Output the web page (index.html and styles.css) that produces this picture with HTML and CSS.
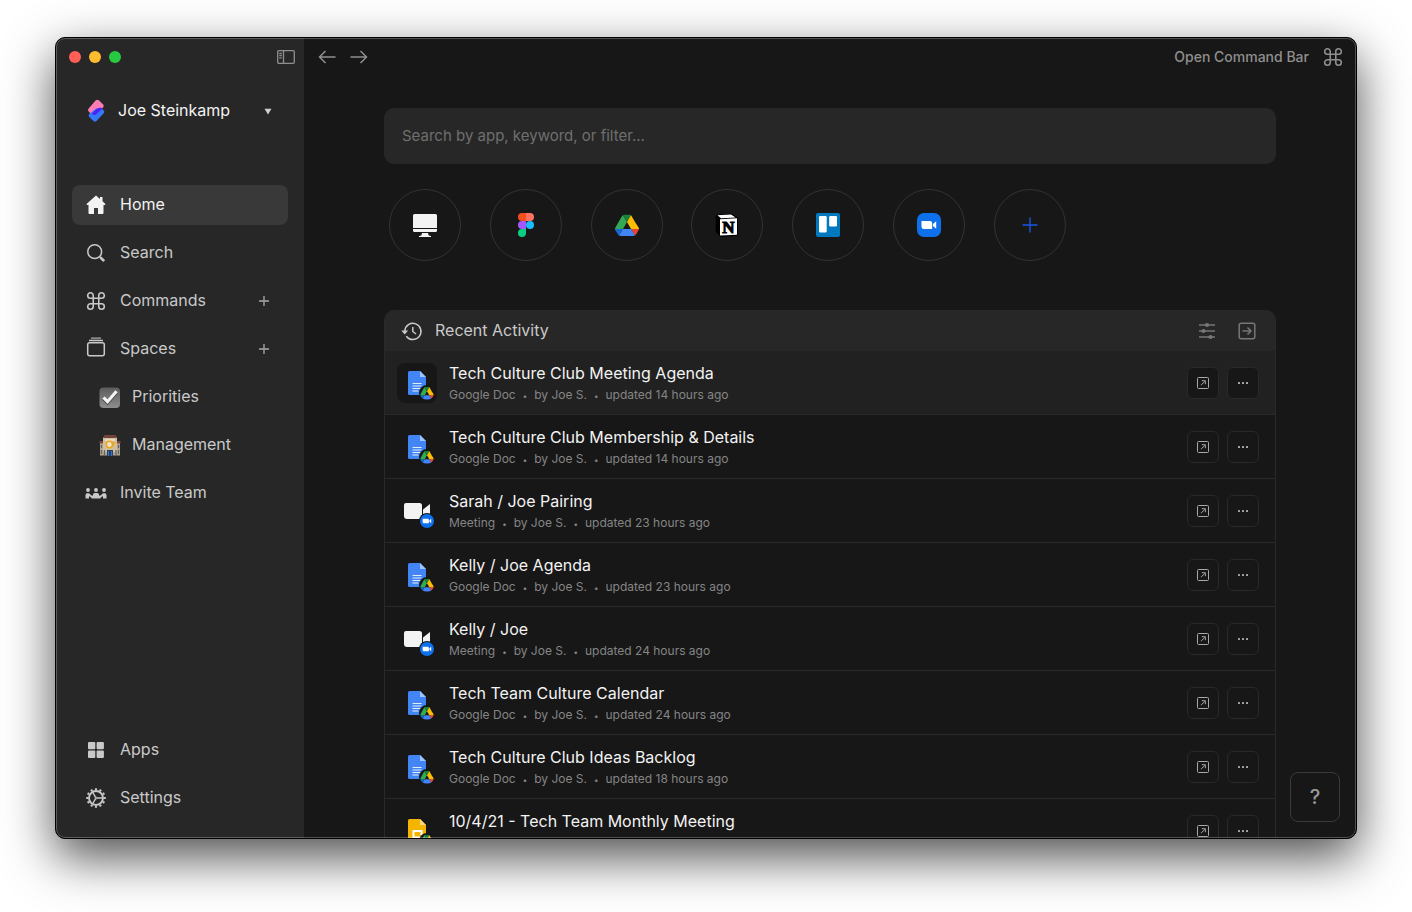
FILE: index.html
```html
<!DOCTYPE html>
<html lang="en">
<head>
<meta charset="utf-8">
<title>Home</title>
<link rel="stylesheet" href="styles.css">
</head>
<body>
<svg class="sprite" aria-hidden="true">
  <symbol id="command" viewBox="-1 -1 26 26"><path d="M15 6v12a3 3 0 1 0 3-3H6a3 3 0 1 0 3 3V6a3 3 0 1 0-3 3h12a3 3 0 1 0-3-3" fill="none" stroke="currentColor" stroke-width="1.700"/></symbol>
  <symbol id="plus" viewBox="0 0 24 24"><path d="M12 7v10M7 12h10" fill="none" stroke="currentColor" stroke-width="1.300"/></symbol>
  <symbol id="drive" viewBox="0 0 24 22">
    <path d="M1.800 18.600 3 20.500c.3.500.7.900 1.100 1.100L8 15H0c0 .5.100 1 .4 1.500z" fill="#1967d2"/>
    <path d="M12 8 8 1.200c-.4.200-.8.600-1.100 1L.4 13.500C.1 14 0 14.500 0 15h8z" fill="#34a853"/>
    <path d="M19.900 21.600c.4-.2.800-.6 1.100-1l.5-.9 2.100-3.700c.3-.5.4-1 .4-1h-8l1.700 3.300z" fill="#ea4335"/>
    <path d="M12 8l4-6.800C15.600.9 15.100.8 14.600.8H9.400c-.5 0-1 .1-1.400.4z" fill="#188038"/>
    <path d="M16 15H8l-3.900 6.600c.4.200.9.400 1.400.4h13c.5 0 1-.1 1.400-.4z" fill="#4285f4"/>
    <path d="m20 8.100-3.300-5.900c-.2-.4-.400-.8-.8-1L12 8l4 7h8c0-.5-.1-1-.4-1.500z" fill="#fbbc04"/>
  </symbol>
  <symbol id="zoom" viewBox="0 0 24 24"><rect width="24" height="24" rx="7" fill="#0e71eb"/><path d="M4.500 8h8.500a2.200 2.200 0 0 1 2.200 2.200V16H6.800a2.300 2.300 0 0 1-2.300-2.300zM16 11l3.200-2.700v7.400L16 13z" fill="#fff"/></symbol>
  <symbol id="file-doc" viewBox="0 0 40 40"><path d="M13 8h10l6 6v16.500q0 1.500-1.500 1.500h-15Q11 32 11 30.500v-21Q11 8 12.500 8z" fill="#4285f4"/><path d="M23 8l6 6h-6z" fill="#a1c2fa"/><path d="M15.500 20.500h9M15.500 23h9M15.500 25.500h9M15.500 28h6" stroke="#e3edfd" stroke-width="1.200"/></symbol>
  <symbol id="file-slides" viewBox="0 0 40 40"><path d="M13 8h10l6 6v16.500q0 1.500-1.500 1.500h-15Q11 32 11 30.500v-21Q11 8 12.500 8z" fill="#f4b400"/><path d="M23 8l6 6h-6z" fill="#fada80"/><path d="M16.500 20h8v6.500h-8z" fill="none" stroke="#fff" stroke-width="2"/></symbol>
  <symbol id="file-meeting" viewBox="0 0 40 40"><path d="M9 12h13.500q2.500 0 2.500 2.500V28H10q-3 0-3-3V14q0-2 2-2z" fill="#f3f3f3"/><path d="M26 18.500l7-5.500v14l-7-4z" fill="#f3f3f3"/></symbol>
  <symbol id="open" viewBox="0 0 16 16"><rect x="2.500" y="2.500" width="11" height="11" rx="1" fill="none" stroke="currentColor"/><path d="M6 10.200l3.800-3.800M6.800 5.700h3.500v3.500" fill="none" stroke="currentColor"/></symbol>
  <symbol id="dots" viewBox="0 0 16 16"><g fill="currentColor"><rect x="3" y="7" width="2" height="2" rx=".5"/><rect x="7" y="7" width="2" height="2" rx=".5"/><rect x="11" y="7" width="2" height="2" rx=".5"/></g></symbol>
</svg>

<div class="window">
  <aside class="sidebar">
    <div class="titlebar">
      <div class="lights"><button class="light red" aria-label="Close"></button><button class="light amber" aria-label="Minimize"></button><button class="light green" aria-label="Zoom"></button></div>
      <button class="plain" aria-label="Toggle sidebar"><svg width="18" height="14" viewBox="0 0 18 14" fill="none" stroke="currentColor" stroke-width="1.300"><rect x=".7" y=".7" width="16.600" height="12.600" rx="1.200"/><path d="M6.500 1v12M2.300 3.500h2.500M2.300 5.700h2.500M2.300 7.900h2.500"/></svg></button>
    </div>
    <button class="account">
      <svg class="icon" viewBox="0 0 24 24"><path d="M11.800 1.300q1.500-1.200 3 0l4.400 4.200q1.200 1.300 0 2.800L13 14.500H6.500l-1.800-2q-1.600-1.500 0-3z" fill="#fe7db4"/><path d="M12 9.500h6l1.700 2q1.400 1.300 0 2.800l-7.200 7.800q-1.500 1.400-3 0l-4.300-4.200q-1.300-1.400 0-2.800z" fill="#3478f8"/><path d="M8 14.500l5-4.700q1.500-1 3-1h1.500q.8.800 0 1.700l-5 4.500q-1.500 1.300-3 .9z" fill="#4a22f5"/></svg>
      <span class="label">Joe Steinkamp</span>
      <svg class="icon" viewBox="0 0 24 24"><path d="M8.500 9.700h7L12 15.500z" fill="#cfcfcf"/></svg>
    </button>
    <nav class="nav">
      <ul class="list">
        <li class="item active"><a href="#home"><svg class="icon" viewBox="0 0 24 24" fill="currentColor"><path d="M12 2.500l4 3.500V4h2.500v4.200l2.700 2.500q.6 1.100-.4 1.300H19.500v8q0 1-1 1H14v-6h-4v6H5.500q-1 0-1-1v-8H3.200q-1-.2-.4-1.300z"/></svg><span class="label">Home</span></a></li>
        <li class="item"><a href="#search"><svg class="icon" viewBox="0 0 24 24" fill="none" stroke="currentColor"><circle cx="10.700" cy="10.700" r="6.900" stroke-width="1.500"/><path d="M15.700 15.700l1.500 1.500" stroke-width="1.500"/><path d="M16.500 16.500l3.700 3.700" stroke-width="2.600"/></svg><span class="label">Search</span></a></li>
        <li class="item"><a href="#commands"><svg class="icon"><use href="#command"/></svg><span class="label">Commands</span></a><button class="plain add" aria-label="Add command"><svg class="icon"><use href="#plus"/></svg></button></li>
        <li class="item"><a href="#spaces"><svg class="icon" viewBox="0 0 24 24" fill="none" stroke="currentColor" stroke-width="1.500"><rect x="3.700" y="5.700" width="16.600" height="13" rx="2"/><path d="M5 3.500h14"/><path d="M7 1.200h10" opacity=".6" stroke-width="1.800"/></svg><span class="label">Spaces</span></a><button class="plain add" aria-label="Add space"><svg class="icon"><use href="#plus"/></svg></button></li>
        <li class="item sub"><a href="#priorities"><svg class="icon" viewBox="0 0 24 24"><defs><linearGradient id="tile" x2="0" y2="1"><stop stop-color="#5c5c5c"/><stop offset="1" stop-color="#8e8e8e"/></linearGradient></defs><rect x="1.500" y="2.500" width="20.500" height="20.500" rx="4" fill="url(#tile)"/><path d="M5.500 13.500l4 4L18.500 7" fill="none" stroke="#444" stroke-width="3.600"/><path d="M5.500 12.500l4 4.200L18.500 6.300" fill="none" stroke="#f4f4f4" stroke-width="3.200"/></svg><span class="label">Priorities</span></a></li>
        <li class="item sub"><a href="#management"><svg class="icon" viewBox="0 0 24 24"><path d="M2 9h20v13.500H2z" fill="#b5a58b"/><path d="M5 4h14v15H5z" fill="#cfbfa2"/><path d="M6.500 2h11l1.500 3H5z" fill="#75413b"/><path d="M1.500 8H5v2.500H1.500zM19 8h3.500v2.500H19z" fill="#7d463f"/><path d="M7 6.500h10v1H7z" fill="#fff5df"/><circle cx="11.500" cy="11.500" r="3.200" fill="#ede2cc" stroke="#f0a51c" stroke-width="1.500"/><path d="M13 10l5-1.500-3 5z" fill="#eda51f"/><path d="M3.500 12v3M20.500 12v3M3.500 17v4M6.500 17v5M18 17v5M20.500 17v4" stroke="#5d6670" stroke-width="1.300"/><path d="M9 17h6v6H9z" fill="#303a50"/><path d="M10.500 18v5M13.500 18v5" stroke="#2f72c9" stroke-width="1.300"/></svg><span class="label">Management</span></a></li>
        <li class="item"><a href="#invite"><svg class="icon" viewBox="0 0 24 24" fill="currentColor"><circle cx="4" cy="9" r="1.900"/><circle cx="12" cy="9" r="1.900"/><circle cx="20" cy="9" r="1.900"/><path d="M1.500 17.500v-3.500q0-1.800 1.800-1.800h1.400q1 0 1.800 1.500l2 1.400q.5-3 2-3h3q1.500 0 2 3l2-1.400q.8-1.500 1.800-1.500h1.400q1.800 0 1.800 1.800v3.500h-3.500v-2.500l-2.500 1.700v.8h-9v-.8L5 15v2.500z"/></svg><span class="label">Invite Team</span></a></li>
      </ul>
      <ul class="list">
        <li class="item"><a href="#apps"><svg class="icon" viewBox="0 0 24 24" fill="currentColor"><rect x="4" y="4" width="7.300" height="7.300" rx="1"/><rect x="12.600" y="4" width="7.300" height="7.300" rx="1"/><rect x="4" y="12.600" width="7.300" height="7.300" rx="1"/><rect x="12.600" y="12.600" width="7.300" height="7.300" rx="1"/></svg><span class="label">Apps</span></a></li>
        <li class="item"><a href="#settings"><svg class="icon" viewBox="0 0 24 24" fill="none" stroke="currentColor"><circle cx="12" cy="12" r="7" stroke-width="1.900"/><circle cx="12" cy="12" r="8.800" stroke-width="2" pathLength="48" stroke-dasharray="1.800 2.200" stroke-dashoffset=".9"/><path d="M13 12h6M11.500 11.200L8.500 6M11.500 12.800L8.500 18" stroke-width="1.400"/><circle cx="12" cy="12" r="1" stroke-width="1"/></svg><span class="label">Settings</span></a></li>
      </ul>
    </nav>
  </aside>

  <main class="main">
    <header class="topbar">
      <div class="history">
        <button class="plain" aria-label="Back"><svg width="18" height="14" viewBox="0 0 18 14" fill="none" stroke="currentColor" stroke-width="1.500"><path d="M17.500 7H1.500M7.500 1L1.500 7l6 6"/></svg></button>
        <button class="plain" aria-label="Forward"><svg width="18" height="14" viewBox="0 0 18 14" fill="none" stroke="currentColor" stroke-width="1.500"><path d="M.5 7h16M10.500 1l6 6-6 6"/></svg></button>
      </div>
      <button class="plain command-bar">Open Command Bar <svg class="icon"><use href="#command"/></svg></button>
    </header>
    <div class="content">
      <input class="search" type="search" aria-label="Search" placeholder="Search by app, keyword, or filter...">
      <div class="apps">
        <button class="app" aria-label="Desktop"><svg class="icon" viewBox="0 0 24 24" fill="#f3f3f3"><path d="M1.500 1h21Q24 1 24 2.500V15H0V2.500Q0 1 1.500 1zM0 16h24v1.500q0 1.500-1.500 1.500h-21Q0 19 0 17.500zM9 20h6l.7 2.500 2.300.6v.9H6v-.9l2.300-.6z"/></svg></button>
        <button class="app" aria-label="Figma"><svg class="icon" viewBox="0 0 24 24"><path d="M8 0h4v8H8a4 4 0 0 1 0-8z" fill="#f24e1e"/><path d="M12 0h4a4 4 0 0 1 0 8h-4z" fill="#ff7262"/><path d="M8 8h4v8H8a4 4 0 0 1 0-8z" fill="#a259ff"/><circle cx="16" cy="12" r="4" fill="#1abcfe"/><path d="M8 16h4v4a4 4 0 1 1-4-4z" fill="#0acf83"/></svg></button>
        <button class="app" aria-label="Google Drive"><svg class="icon"><use href="#drive"/></svg></button>
        <button class="app" aria-label="Notion"><svg class="icon" viewBox="0 0 24 24"><path d="M1.500 1.800L16.500.5 23 4.500v18L5.500 24 .7 18.500V3z" fill="#000"/><path d="M2.500 2.300L16 1.500l4.500 3-14.500.8z" fill="#fff"/><path d="M5 6.300l17-1v16.400L5 22.600z" fill="#fff"/><text x="13.500" y="19.800" class="notion-letter">N</text></svg></button>
        <button class="app" aria-label="Trello"><svg class="icon" viewBox="0 0 24 24"><rect width="24" height="24" rx="2" fill="#0079bf"/><rect x="3" y="3" width="7.700" height="16.500" rx="1.200" fill="#fff"/><rect x="13.200" y="3" width="7.800" height="10.500" rx="1.200" fill="#fff"/></svg></button>
        <button class="app" aria-label="Zoom"><svg class="icon"><use href="#zoom"/></svg></button>
        <button class="app add-app" aria-label="Add app"><svg class="icon" viewBox="0 0 24 24"><path d="M12 4.500v15M4.500 12h15" stroke="currentColor" stroke-width="1.400"/></svg></button>
      </div>

      <section class="panel" aria-labelledby="recent">
        <div class="panel-head">
          <svg class="icon" viewBox="0 0 24 24" fill="none" stroke="currentColor"><path d="M4.800 12a8.100 8.100 0 1 1 1.500 5.200" stroke-width="1.500"/><path d="M1.300 11.500h6.800l-3.400 4z" fill="currentColor" stroke="none"/><path d="M12.800 8v4.500l3.200 2.500" stroke-width="1.500"/></svg>
          <h2 id="recent" class="label">Recent Activity</h2>
          <button class="plain" aria-label="Filter"><svg width="18" height="18" viewBox="0 0 18 18" stroke="currentColor" fill="currentColor"><path d="M1 3h16M1 9h16M1 15h16" stroke-width="1.700"/><g stroke="none"><circle cx="9" cy="3" r="2.100"/><circle cx="5.500" cy="9" r="2.100"/><circle cx="12.500" cy="15" r="2.100"/></g></svg></button>
          <button class="plain" aria-label="Open list"><svg width="18" height="18" viewBox="0 0 18 18" stroke="currentColor" fill="none" stroke-width="1.500"><rect x="1.200" y="1.200" width="15.600" height="15.600" rx="2"/><path d="M4.500 9h8.500M9.500 5.500L13 9l-3.500 3.500"/></svg></button>
        </div>
        <ul class="rows">
          <li class="row current"><span class="thumb"><svg class="file"><use href="#file-doc"/></svg><svg class="badge"><use href="#drive"/></svg></span><div class="info"><h3>Tech Culture Club Meeting Agenda</h3><p class="meta"><span>Google Doc</span><span>by Joe S.</span><span>updated 14 hours ago</span></p></div><button class="square" aria-label="Open"><svg><use href="#open"/></svg></button><button class="square" aria-label="More"><svg><use href="#dots"/></svg></button></li>
          <li class="row"><span class="thumb"><svg class="file"><use href="#file-doc"/></svg><svg class="badge"><use href="#drive"/></svg></span><div class="info"><h3>Tech Culture Club Membership &amp; Details</h3><p class="meta"><span>Google Doc</span><span>by Joe S.</span><span>updated 14 hours ago</span></p></div><button class="square" aria-label="Open"><svg><use href="#open"/></svg></button><button class="square" aria-label="More"><svg><use href="#dots"/></svg></button></li>
          <li class="row"><span class="thumb"><svg class="file"><use href="#file-meeting"/></svg><svg class="badge"><use href="#zoom"/></svg></span><div class="info"><h3>Sarah / Joe Pairing</h3><p class="meta"><span>Meeting</span><span>by Joe S.</span><span>updated 23 hours ago</span></p></div><button class="square" aria-label="Open"><svg><use href="#open"/></svg></button><button class="square" aria-label="More"><svg><use href="#dots"/></svg></button></li>
          <li class="row"><span class="thumb"><svg class="file"><use href="#file-doc"/></svg><svg class="badge"><use href="#drive"/></svg></span><div class="info"><h3>Kelly / Joe Agenda</h3><p class="meta"><span>Google Doc</span><span>by Joe S.</span><span>updated 23 hours ago</span></p></div><button class="square" aria-label="Open"><svg><use href="#open"/></svg></button><button class="square" aria-label="More"><svg><use href="#dots"/></svg></button></li>
          <li class="row"><span class="thumb"><svg class="file"><use href="#file-meeting"/></svg><svg class="badge"><use href="#zoom"/></svg></span><div class="info"><h3>Kelly / Joe</h3><p class="meta"><span>Meeting</span><span>by Joe S.</span><span>updated 24 hours ago</span></p></div><button class="square" aria-label="Open"><svg><use href="#open"/></svg></button><button class="square" aria-label="More"><svg><use href="#dots"/></svg></button></li>
          <li class="row"><span class="thumb"><svg class="file"><use href="#file-doc"/></svg><svg class="badge"><use href="#drive"/></svg></span><div class="info"><h3>Tech Team Culture Calendar</h3><p class="meta"><span>Google Doc</span><span>by Joe S.</span><span>updated 24 hours ago</span></p></div><button class="square" aria-label="Open"><svg><use href="#open"/></svg></button><button class="square" aria-label="More"><svg><use href="#dots"/></svg></button></li>
          <li class="row"><span class="thumb"><svg class="file"><use href="#file-doc"/></svg><svg class="badge"><use href="#drive"/></svg></span><div class="info"><h3>Tech Culture Club Ideas Backlog</h3><p class="meta"><span>Google Doc</span><span>by Joe S.</span><span>updated 18 hours ago</span></p></div><button class="square" aria-label="Open"><svg><use href="#open"/></svg></button><button class="square" aria-label="More"><svg><use href="#dots"/></svg></button></li>
          <li class="row"><span class="thumb"><svg class="file"><use href="#file-slides"/></svg><svg class="badge"><use href="#drive"/></svg></span><div class="info"><h3>10/4/21 - Tech Team Monthly Meeting</h3></div><button class="square" aria-label="Open"><svg><use href="#open"/></svg></button><button class="square" aria-label="More"><svg><use href="#dots"/></svg></button></li>
        </ul>
      </section>
    </div>
    <button class="help" aria-label="Help">?</button>
  </main>
</div>
</body>
</html>
```

FILE: styles.css
```css
* { box-sizing: border-box; }

body {
  margin: 0;
  height: 100vh;
  padding: 37px 55px 73px;
  background: #fff;
  color: #c9c9c9;
  font: 400 16px/24px Inter, "Liberation Sans", sans-serif;
  overflow: hidden;
}

ul, h2, h3, p { margin: 0; padding: 0; list-style: none; font-weight: 400; }
a { color: inherit; text-decoration: none; }
svg { display: block; flex: none; }
button {
  margin: 0;
  padding: 0;
  border: 0;
  background: none;
  color: inherit;
  font: inherit;
  cursor: pointer;
}

.sprite { position: absolute; width: 0; height: 0; }
.icon { width: 24px; height: 24px; }
.plain { display: flex; align-items: center; color: #8f8f8f; }
.label { padding-bottom: 2px; }

.window {
  position: relative;
  display: flex;
  height: 100%;
  border: 1px solid #000;
  border-radius: 10px;
  background: #171717;
  box-shadow: 0 18px 50px rgba(0, 0, 0, .7);
  overflow: hidden;
}
.window::after {
  content: "";
  position: absolute;
  inset: 0;
  border: 1px solid rgba(255, 255, 255, .25);
  border-radius: 9px;
  pointer-events: none;
}

/* Sidebar */
.sidebar {
  display: flex;
  flex-direction: column;
  flex: none;
  width: 248px;
  background: #272727;
}
.titlebar {
  display: flex;
  align-items: center;
  justify-content: space-between;
  height: 38px;
  padding: 0 9px 0 13px;
}
.lights { display: flex; gap: 8px; }
.light { width: 12px; height: 12px; border-radius: 50%; }
.red { background: #ff5f57; }
.amber { background: #febc2e; }
.green { background: #28c840; }

.account {
  display: flex;
  align-items: center;
  gap: 10px;
  height: 40px;
  margin: 15px 16px 54px;
  padding: 0 8px 0 12px;
  color: #f3f3f3;
  text-align: left;
}
.account .label { flex: 1; }

.nav {
  display: flex;
  flex: 1;
  flex-direction: column;
  justify-content: space-between;
  padding: 0 16px 20px;
}
.list { display: flex; flex-direction: column; gap: 8px; }
.item {
  display: flex;
  align-items: center;
  height: 40px;
  padding: 0 12px;
  border-radius: 8px;
}
.item a { display: flex; flex: 1; align-items: center; gap: 12px; }
.item.active { background: #393939; color: #f3f3f3; }
.item.sub { padding-left: 26px; }
.item.sub a { gap: 10px; }
.add { color: #a8a8a8; }

/* Main area */
.main { position: relative; flex: 1; min-width: 0; }
.topbar {
  display: flex;
  align-items: center;
  justify-content: space-between;
  height: 38px;
  padding: 0 11px 0 14px;
}
.history { display: flex; gap: 14px; }
.command-bar { gap: 12px; font-size: 14px; font-weight: 500; }

.content { padding: 32px 80px 0; }
.search {
  display: block;
  width: 100%;
  height: 56px;
  padding: 0 18px 2px;
  border: 0;
  border-radius: 10px;
  outline: 0;
  background: #272727;
  color: #f3f3f3;
  font: 400 15px/24px Inter, "Liberation Sans", sans-serif;
}
.search::placeholder { color: #6f6f6f; }

.apps {
  display: flex;
  justify-content: space-between;
  max-width: 682px;
  padding: 25px 0 49px 5px;
}
.app {
  display: flex;
  align-items: center;
  justify-content: center;
  width: 72px;
  height: 72px;
  border: 1px solid #333;
  border-radius: 50%;
}
.add-app { color: #1a55e8; }
.notion-letter {
  fill: #000;
  stroke: #000;
  stroke-width: 1px;
  font: bold 17px "Liberation Serif", serif;
  text-anchor: middle;
}

/* Recent activity */
.panel {
  border: 1px solid #292929;
  border-top: 0;
  border-radius: 10px 10px 0 0;
  overflow: hidden;
}
.panel-head {
  display: flex;
  align-items: center;
  gap: 22px;
  height: 41px;
  padding: 0 19px 0 15px;
  background: #272727;
}
.panel-head h2 {
  flex: 1;
  margin-left: -11px;
  font-size: 16px;
}
.panel-head .plain { color: #777; }

.row {
  display: flex;
  gap: 8px;
  height: 64px;
  padding: 12px 16px 0 12px;
  border-bottom: 1px solid #292929;
}
.row.current { background: #212121; }
.thumb {
  position: relative;
  width: 40px;
  height: 40px;
  border-radius: 8px;
  background: #171717;
}
.file { width: 40px; height: 40px; }
.badge {
  position: absolute;
  right: 2px;
  bottom: 2px;
  width: 16px;
  height: 16px;
  padding: 2px;
  border-radius: 50%;
  background: #171717;
}
.badge { padding: 1px; }
.info { flex: 1; padding-left: 4px; }
.info h3 {
  margin-bottom: 2px;
  color: #f3f3f3;
  font-size: 16px;
  line-height: 20px;
}
.meta {
  display: flex;
  color: #858585;
  font-size: 12px;
  line-height: 20px;
}
.meta span + span::before { content: "•"; margin: 0 7px; font-size: 8px; }
.square {
  display: flex;
  align-items: center;
  justify-content: center;
  width: 32px;
  height: 32px;
  margin-top: 4px;
  border: 1px solid #292929;
  border-radius: 6px;
  background: #171717;
  color: #a8a8a8;
}
.square svg { width: 16px; height: 16px; }

.help {
  position: absolute;
  right: 16px;
  bottom: 16px;
  width: 50px;
  height: 50px;
  border: 1px solid #3a3a3a;
  border-radius: 8px;
  background: #171717;
  color: #9a9a9a;
  font-size: 20px;
  font-weight: 500;
}
```
